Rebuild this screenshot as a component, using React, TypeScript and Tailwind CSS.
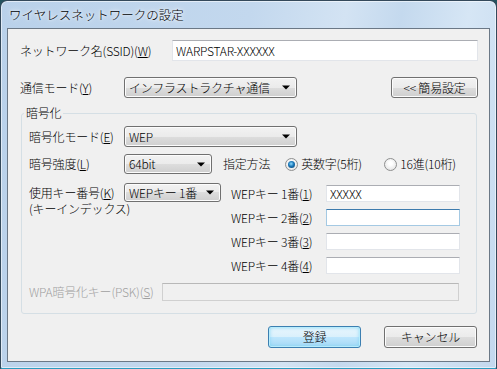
import type { ReactNode } from "react";

const font =
  "font-['Noto_Sans_CJK_JP','Noto_Sans',sans-serif] font-light text-[12px] leading-[14px] tracking-[-0.2px] text-black";

const buttonFace =
  "rounded-[3px] border border-[#707070] bg-[linear-gradient(#f2f2f2_0%,#ebebeb_50%,#dddddd_50%,#cfcfcf_100%)] shadow-[inset_0_0_0_1px_#fcfcfc]";

function Key({ k }: { k: string }) {
  return (
    <>
      (<u className="underline-offset-[1px]">{k}</u>)
    </>
  );
}

function TextBox({
  value = "",
  className = "",
  focused = false,
  disabled = false,
}: {
  value?: string;
  className?: string;
  focused?: boolean;
  disabled?: boolean;
}) {
  const tone = focused
    ? "border-[#a4c9e3] border-t-[#3d7bad] bg-white"
    : disabled
      ? "border-[#d0d0d0] border-t-[#b8b8b8] bg-[#f0f0f0]"
      : "border-[#e2e5ea] border-t-[#abadb3] bg-white";
  return (
    <input
      readOnly
      value={value}
      disabled={disabled}
      className={`border px-[3px] outline-none ${tone} ${className}`}
    />
  );
}

function ComboBox({ text, className = "" }: { text: string; className?: string }) {
  return (
    <div
      className={`flex items-center justify-between pl-[4px] pr-[6px] ${buttonFace} ${className}`}
    >
      <span className="whitespace-nowrap">{text}</span>
      <svg width="8" height="5" viewBox="0 0 8 5" className="shrink-0">
        <path d="M0 0.5h8L4 4.5z" fill="#000" />
      </svg>
    </div>
  );
}

function PushButton({
  children,
  className = "",
  primary = false,
}: {
  children: ReactNode;
  className?: string;
  primary?: boolean;
}) {
  const face = primary
    ? "rounded-[3px] border border-[#3c7fb1] bg-[linear-gradient(#eaf6fd_0%,#d9f0fc_50%,#bee6fd_50%,#a7d9f5_100%)] shadow-[inset_0_0_0_1px_#b7ecfc,inset_0_0_4px_#6fd0f4]"
    : buttonFace;
  return (
    <button type="button" className={`flex items-center justify-center ${face} ${className}`}>
      {children}
    </button>
  );
}

function Radio({ checked = false }: { checked?: boolean }) {
  return (
    <span className="flex h-[13px] w-[13px] shrink-0 items-center justify-center rounded-full border border-[#8e8f8f] bg-[radial-gradient(circle_at_50%_40%,#ffffff_20%,#dcdcdc_100%)]">
      {checked && (
        <span className="h-[7px] w-[7px] rounded-full bg-[radial-gradient(circle_at_45%_40%,#8fdcff_0%,#1a77b8_45%,#0b3e66_100%)]" />
      )}
    </span>
  );
}

export default function App() {
  return (
    <div className={`h-[369px] w-[497px] bg-[#23535f] ${font}`}>
      <div className="flex h-full flex-col rounded-t-[7px] rounded-b-[2px] border border-[#34495b] border-b-[#2c9cc0] bg-[linear-gradient(100deg,#b9d1ea_0%,#c3d8ee_45%,#d3e3f3_62%,#c4d9ee_72%,#d6e6f5_84%,#c3d8ee_100%)] px-[6px] pb-[6px] shadow-[inset_0_0_0_1px_rgba(255,255,255,0.55)]">
        <div className="flex h-[27px] items-center pl-[2px] text-[12.5px] tracking-normal [text-shadow:0_0_6px_#ffffff,0_0_3px_#ffffff]">
          ワイヤレスネットワークの設定
        </div>

        <div className="flex flex-1 flex-col border border-[#6b7886] bg-[#f0f0f0]">
          <div className="mt-[11px] ml-[12px] flex h-[21px] items-center">
            <span className="w-[152px] whitespace-nowrap">
              ネットワーク名(SSID)<Key k="W" />
            </span>
            <TextBox value="WARPSTAR-XXXXXX" className="h-[21px] w-[306px]" />
          </div>

          <div className="mt-[16px] ml-[12px] flex h-[21px] items-center">
            <span className="w-[104px] whitespace-nowrap">
              通信モード<Key k="Y" />
            </span>
            <ComboBox text="インフラストラクチャ通信" className="h-[21px] w-[173px]" />
            <PushButton className="ml-[94px] h-[21px] w-[87px]">&lt;&lt; 簡易設定</PushButton>
          </div>

          <fieldset className="mt-[8px] ml-[13px] w-[456px] rounded-[3px] border border-[#d5dfe5] pb-[12px]">
            <legend className="ml-[2px] px-[2px] leading-[14px]">暗号化</legend>

            <div className="mt-[6px] flex h-[21px] items-center pl-[7px]">
              <span className="w-[95px] whitespace-nowrap">
                暗号化モード<Key k="E" />
              </span>
              <ComboBox text="WEP" className="h-[21px] w-[173px]" />
            </div>

            <div className="mt-[7px] flex h-[20px] items-center pl-[7px]">
              <span className="w-[95px] whitespace-nowrap">
                暗号強度<Key k="L" />
              </span>
              <ComboBox text="64bit" className="h-[20px] w-[88px]" />
              <span className="ml-[11px] whitespace-nowrap">指定方法</span>
              <label className="ml-[15px] flex w-[99px] items-center gap-[3px]">
                <Radio checked />
                <span className="whitespace-nowrap">英数字(5桁)</span>
              </label>
              <label className="flex items-center gap-[3px]">
                <Radio />
                <span className="whitespace-nowrap">16進(10桁)</span>
              </label>
            </div>

            <div className="mt-[9px] flex items-start pl-[7px]">
              <div className="w-[95px] pt-[2px] leading-[16px] whitespace-nowrap">
                <div>
                  使用キー番号<Key k="K" />
                </div>
                <div>(キーインデックス)</div>
              </div>
              <ComboBox text="WEPキー 1番" className="h-[19px] w-[97px]" />
              <div className="mt-[2px] ml-[10px] flex flex-col gap-[7px]">
                {["1", "2", "3", "4"].map((n, i) => (
                  <div key={n} className="flex h-[17px] items-center">
                    <span className="w-[95px] whitespace-nowrap">
                      WEPキー {n}番<Key k={n} />
                    </span>
                    <TextBox
                      value={i === 0 ? "XXXXX" : ""}
                      focused={i === 1}
                      className="h-[17px] w-[134px]"
                    />
                  </div>
                ))}
              </div>
            </div>

            <div className="mt-[9px] flex h-[18px] items-center pl-[7px]">
              <span className="w-[133px] whitespace-nowrap text-[#a0a0a0]">
                WPA暗号化キー(PSK)<Key k="S" />
              </span>
              <TextBox disabled className="h-[18px] w-[297px]" />
            </div>
          </fieldset>

          <div className="mt-[12px] flex justify-end gap-[23px] pr-[12px]">
            <PushButton primary className="h-[22px] w-[93px]">
              登録
            </PushButton>
            <PushButton className="h-[22px] w-[93px]">キャンセル</PushButton>
          </div>
        </div>
      </div>
    </div>
  );
}
